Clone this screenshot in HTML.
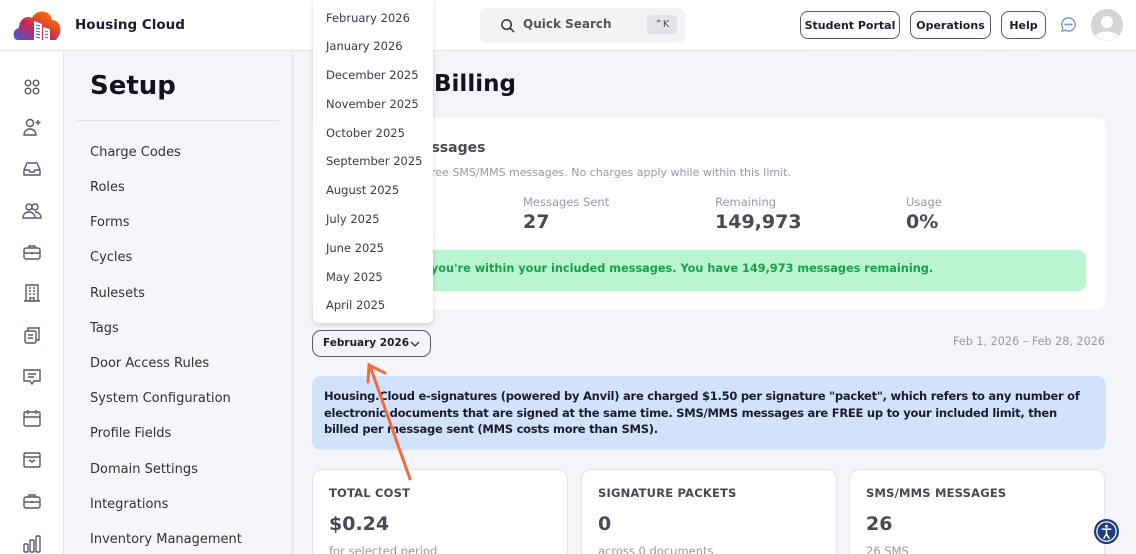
<!DOCTYPE html>
<html><head><meta charset="utf-8"><style>
*{box-sizing:border-box;margin:0;padding:0}
html{width:1136px;height:554px;overflow:hidden}
body{width:1136px;height:554px;overflow:hidden;background:#f5f5f9;font-family:"DejaVu Sans","Liberation Sans",sans-serif;color:#1e1b2e;position:relative}
.hdr{position:absolute;left:0;top:0;width:1136px;height:51px;background:#fff;border-bottom:1px solid #e5e5ea}
.rail{position:absolute;left:0;top:51px;width:64px;height:503px;background:#fff;border-right:1px solid #e5e5ea}
.setup{position:absolute;left:64px;top:51px;width:229px;height:503px;background:#f5f5fa;border-right:1px solid #e3e3e8}
.setup h1{position:absolute;left:26px;top:20px;font-size:26px;font-weight:bold;color:#15121f}
.setup hr{position:absolute;left:13px;top:69px;width:202px;border:0;border-top:1px solid #e0e0e6}
.setup .it{position:absolute;left:26px;font-size:13px;color:#333}
.btn{position:absolute;top:11px;height:28px;border:1px solid #555a66;border-radius:8px;font-size:11px;font-weight:bold;display:flex;align-items:center;justify-content:center;background:#fff}
.ic{position:absolute;left:22px;width:20px;height:20px}
.card{position:absolute;background:#fff;border-radius:10px}
.dd{position:absolute;left:313px;top:0;width:120px;height:323px;background:#fff;border-radius:0 0 6px 6px;box-shadow:0 2px 6px rgba(0,0,0,.15)}
.dd div{position:absolute;left:13px;font-size:11.5px;color:#3a3a48}
.lbl{font-size:11.5px;color:#9a98a8;position:absolute}
.val{font-size:19px;font-weight:bold;color:#4a4852;position:absolute}
.sc{position:absolute;top:469px;width:256px;height:85px;background:#fff;border:1px solid #e3e3ea;border-bottom:0;border-radius:10px 10px 0 0;overflow:hidden}
.sc .t{position:absolute;left:16px;top:16px;font-size:11.5px;font-weight:bold;color:#4a4852;letter-spacing:.2px}
.sc .v{position:absolute;left:16px;top:43px;font-size:19px;font-weight:bold;color:#4a4852}
.sc .s{position:absolute;left:16px;top:74px;font-size:11.5px;color:#9a98a8}
</style></head><body>
<div class="hdr">
 <svg style="position:absolute;left:12px;top:7px" width="50" height="36" viewBox="0 0 50 36"><defs><linearGradient id="g" x1="0" y1="1" x2="1" y2="0"><stop offset="0" stop-color="#3b5bdb"/><stop offset=".4" stop-color="#c2255c"/><stop offset=".8" stop-color="#f76707"/><stop offset="1" stop-color="#fab005"/></linearGradient></defs><path d="M6 33 C0 33 0 22 7 21 C7 12 15 8 20 11 C24 2 38 2 40 13 C48 13 51 24 46 30 C45 32 44 33 42 33 Z" fill="url(#g)"/><path d="M22 33 V14 L30 17 V33 Z M31 33 V20 L38 22 V33Z" fill="#fff"/><path d="M24 18 l4 1 M24 21 l4 1 M24 24 l4 1 M24 27 l4 1 M24 30 l4 1 M33 24 l3 1 M33 27l3 1 M33 30l3 1" stroke="#7048e8" stroke-width="1"/></svg>
 <div style="position:absolute;left:75px;top:17px;font-size:13.5px;font-weight:bold">Housing Cloud</div>
 <div style="position:absolute;left:480px;top:8px;width:205px;height:35px;background:#f3f3f6;border-radius:8px">
  <svg style="position:absolute;left:20px;top:10px" width="15" height="15" viewBox="0 0 16 16" fill="none" stroke="#333" stroke-width="1.6"><circle cx="7" cy="7" r="5"/><path d="M11 11l4 4"/></svg>
  <span style="position:absolute;left:43px;top:9px;font-size:12px;font-weight:bold;color:#555">Quick Search</span>
  <span style="position:absolute;left:167px;top:7px;width:30px;height:19px;background:#e2e2e8;border-radius:4px;font-size:10px;color:#555;text-align:center;line-height:19px">⌃K</span>
 </div>
 <div class="btn" style="left:800px;width:100px">Student Portal</div>
 <div class="btn" style="left:910px;width:81px">Operations</div>
 <div class="btn" style="left:1001px;width:45px">Help</div>
 <svg style="position:absolute;left:1060px;top:16px" width="17" height="17" viewBox="0 0 18 18" fill="none" stroke="#6b8cc9" stroke-width="1.3"><path d="M9 2a7 7 0 1 1-3.5 13L2 16l1-3.3A7 7 0 0 1 9 2z"/><circle cx="6" cy="9" r=".6" fill="#6b8cc9"/><circle cx="9" cy="9" r=".6" fill="#6b8cc9"/><circle cx="12" cy="9" r=".6" fill="#6b8cc9"/></svg>
 <svg style="position:absolute;left:1091px;top:9px" width="32" height="32" viewBox="0 0 32 32"><circle cx="16" cy="16" r="16" fill="#d5d5d8"/><circle cx="16" cy="13" r="6" fill="#fff"/><path d="M5 27c3-6 19-6 22 0a15 15 0 0 1-22 0z" fill="#fff"/></svg>
</div>
<div class="rail">
 <svg class="ic" style="top:26px" viewBox="0 0 20 20" fill="none" stroke="#555b6b" stroke-width="1.4"><circle cx="6" cy="6" r="2.8"/><circle cx="14" cy="6" r="2.8"/><circle cx="6" cy="14" r="2.8"/><circle cx="14" cy="14" r="2.8"/></svg>
 <svg class="ic" style="top:66px" viewBox="0 0 20 20" fill="none" stroke="#555b6b" stroke-width="1.4"><circle cx="8" cy="6" r="3.5"/><path d="M2 18c0-4 3-6 6-6s6 2 6 6z"/><path d="M16 3v5M13.5 5.5h5"/></svg>
 <svg class="ic" style="top:108px" viewBox="0 0 20 20" fill="none" stroke="#555b6b" stroke-width="1.4"><path d="M2 11l3-7h10l3 7v5H2z"/><path d="M2 11h5l1 2h4l1-2h5"/></svg>
 <svg class="ic" style="top:150px" viewBox="0 0 20 20" fill="none" stroke="#555b6b" stroke-width="1.4"><circle cx="7" cy="6" r="3"/><circle cx="13" cy="6" r="3"/><path d="M1 17c0-4 3-6 6-6s6 2 6 6zM13 11c3 0 6 2 6 6h-6"/></svg>
 <svg class="ic" style="top:191px" viewBox="0 0 20 20" fill="none" stroke="#555b6b" stroke-width="1.4"><rect x="2" y="6" width="16" height="11" rx="2"/><path d="M7 6V4h6v2M2 11h16M10 10v2"/></svg>
 <svg class="ic" style="top:232px" viewBox="0 0 20 20" fill="none" stroke="#555b6b" stroke-width="1.4"><path d="M4 18V2h12v16zM2 18h16M7 5h2M11 5h2M7 8h2M11 8h2M7 11h2M11 11h2M8 18v-3h4v3"/></svg>
 <svg class="ic" style="top:274px" viewBox="0 0 20 20" fill="none" stroke="#555b6b" stroke-width="1.4"><rect x="3" y="6" width="11" height="12" rx="1.5"/><path d="M6 6V3h11v12h-3M6 10h5M6 13h5"/></svg>
 <svg class="ic" style="top:316px" viewBox="0 0 20 20" fill="none" stroke="#555b6b" stroke-width="1.4"><path d="M2 3h16v11h-6l-2 3-2-3H2z"/><path d="M6 7h8M6 10h6"/></svg>
 <svg class="ic" style="top:357px" viewBox="0 0 20 20" fill="none" stroke="#555b6b" stroke-width="1.4"><rect x="2" y="4" width="16" height="14" rx="1.5"/><path d="M6 2v4M14 2v4M2 9h16"/></svg>
 <svg class="ic" style="top:399px" viewBox="0 0 20 20" fill="none" stroke="#555b6b" stroke-width="1.4"><rect x="2" y="3" width="16" height="14" rx="1.5"/><path d="M2 7h16M7 10l3 2 3-2"/></svg>
 <svg class="ic" style="top:440px" viewBox="0 0 20 20" fill="none" stroke="#555b6b" stroke-width="1.4"><rect x="2" y="6" width="16" height="11" rx="2"/><path d="M7 6V4h6v2M2 11h16M10 10v2"/></svg>
 <svg class="ic" style="top:482px" viewBox="0 0 20 20" fill="none" stroke="#555b6b" stroke-width="1.4"><rect x="2" y="11" width="4" height="8" rx="1"/><rect x="8" y="7" width="4" height="12" rx="1"/><rect x="14" y="3" width="4" height="16" rx="1"/></svg>
</div>
<div class="setup">
 <h1>Setup</h1><hr>
 <div class="it" style="top:94px">Charge Codes</div>
 <div class="it" style="top:129px">Roles</div>
 <div class="it" style="top:164px">Forms</div>
 <div class="it" style="top:199px">Cycles</div>
 <div class="it" style="top:235px">Rulesets</div>
 <div class="it" style="top:270px">Tags</div>
 <div class="it" style="top:305px">Door Access Rules</div>
 <div class="it" style="top:340px">System Configuration</div>
 <div class="it" style="top:375px">Profile Fields</div>
 <div class="it" style="top:411px">Domain Settings</div>
 <div class="it" style="top:446px">Integrations</div>
 <div class="it" style="top:481px">Inventory Management</div>
</div>
<div style="position:absolute;left:318px;top:71px;font-size:23px;font-weight:bold;color:#15121f">Usage &amp; Billing</div>
<div class="card" style="left:312px;top:118px;width:794px;height:192px">
 <div style="position:absolute;left:14px;top:22px;font-size:14px;font-weight:bold;color:#4a4852">SMS/MMS Messages</div>
 <div style="position:absolute;left:17px;top:48px;font-size:11px;color:#9a98a8">Includes 150,000 free SMS/MMS messages. No charges apply while within this limit.</div>
 <div class="lbl" style="left:17px;top:77px">Included</div><div class="val" style="left:17px;top:93px">150,000</div>
 <div class="lbl" style="left:211px;top:77px">Messages Sent</div><div class="val" style="left:211px;top:93px">27</div>
 <div class="lbl" style="left:403px;top:77px">Remaining</div><div class="val" style="left:403px;top:93px">149,973</div>
 <div class="lbl" style="left:594px;top:77px">Usage</div><div class="val" style="left:594px;top:93px">0%</div>
 <div style="position:absolute;left:17px;top:132px;width:757px;height:41px;background:#b9f5d0;border-radius:8px;font-size:11.3px;font-weight:bold;color:#1a9e4b;padding:12px 14px;white-space:nowrap">Within limit – you're within your included messages. You have 149,973 messages remaining.</div>
</div>
<div style="position:absolute;left:312px;top:330px;width:119px;height:27px;border:1px solid #555a66;border-radius:9px;font-size:10.5px;font-weight:bold;padding:6px 0 0 10px;white-space:nowrap">February 2026 <svg style="position:absolute;left:97px;top:10px" width="10" height="7" viewBox="0 0 10 7" fill="none" stroke="#333" stroke-width="1.3"><path d="M1 1l4 4 4-4"/></svg></div>
<div style="position:absolute;right:31px;top:335px;font-size:11.2px;color:#9a98a8">Feb 1, 2026 – Feb 28, 2026</div>
<div style="position:absolute;left:312px;top:376px;width:794px;height:74px;background:#d1e2fd;border-radius:9px;padding:12px 18px 12px 12px;font-size:11.5px;font-weight:bold;line-height:16.5px;color:#1e1b2e;letter-spacing:-0.25px">Housing.Cloud e-signatures (powered by Anvil) are charged $1.50 per signature "packet", which refers to any number of electronic documents that are signed at the same time. SMS/MMS messages are FREE up to your included limit, then billed per message sent (MMS costs more than SMS).</div>
<div class="sc" style="left:312px"><div class="t">TOTAL COST</div><div class="v">$0.24</div><div class="s">for selected period</div></div>
<div class="sc" style="left:581px"><div class="t">SIGNATURE PACKETS</div><div class="v">0</div><div class="s">across 0 documents</div></div>
<div class="sc" style="left:849px"><div class="t">SMS/MMS MESSAGES</div><div class="v">26</div><div class="s">26 SMS</div></div>
<div class="dd">
 <div style="top:11px">February 2026</div><div style="top:39px">January 2026</div><div style="top:68px">December 2025</div><div style="top:97px">November 2025</div><div style="top:126px">October 2025</div><div style="top:154px">September 2025</div><div style="top:183px">August 2025</div><div style="top:212px">July 2025</div><div style="top:241px">June 2025</div><div style="top:270px">May 2025</div><div style="top:298px">April 2025</div>
</div>
<svg style="position:absolute;left:0;top:0" width="1136" height="554"><path d="M410 479L370 366M368 382L369 365L385 373" fill="none" stroke="#f26b3a" stroke-width="3" stroke-linecap="round"/></svg>
<svg style="position:absolute;left:1093px;top:518px" width="27" height="27" viewBox="0 0 28 28"><circle cx="14" cy="14" r="13" fill="#1f3d7a"/><circle cx="14" cy="14" r="10" fill="none" stroke="#fff" stroke-width="1.3"/><circle cx="14" cy="8.5" r="1.5" fill="#fff"/><path d="M9 11.5h10M14 11.5v5M14 16.5l-3 5M14 16.5l3 5" stroke="#fff" stroke-width="1.6" fill="none"/></svg>
</body></html>
